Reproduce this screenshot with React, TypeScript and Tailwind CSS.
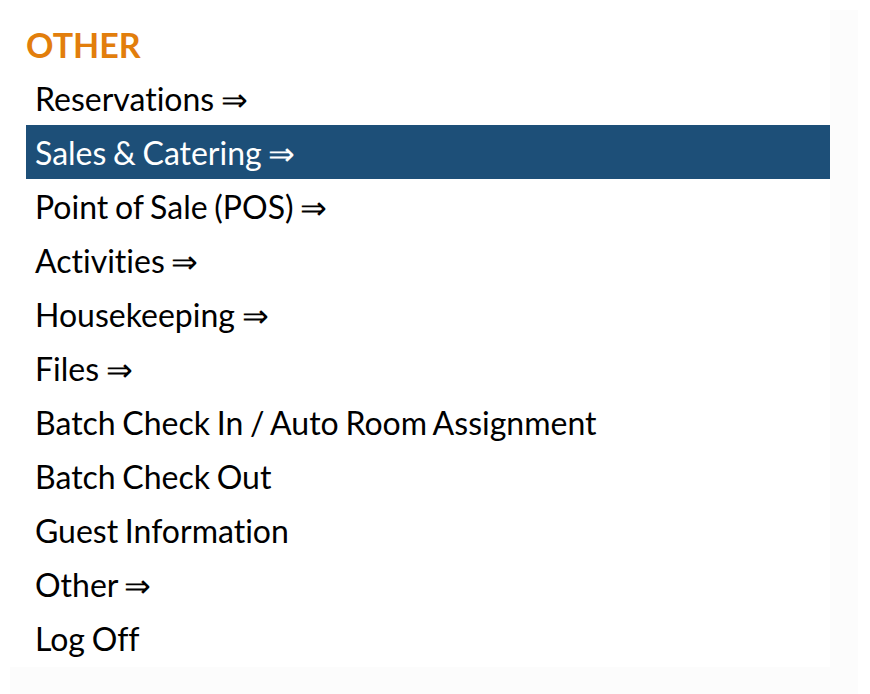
export default function App() {
  const items = [
    'Reservations ⇒',
    'Sales & Catering ⇒',
    'Point of Sale (POS) ⇒',
    'Activities ⇒',
    'Housekeeping ⇒',
    'Files ⇒',
    'Batch Check In / Auto Room Assignment',
    'Batch Check Out',
    'Guest Information',
    'Other ⇒',
    'Log Off',
  ];

  return (
    <div
      className="min-h-screen bg-white pl-[10px] pt-[10px] [font-variant-ligatures:none]"
      style={{ fontFamily: 'Lato, "Noto Sans", sans-serif' }}
    >
      <div className="w-[848px] bg-[#fcfcfc] pr-[28px] pb-[28px]">
        <div className="bg-white pl-4 pb-[2px]">
          <h2 className="h-[61px] pt-[16px] text-[34px] leading-[38px] font-bold text-[#e27e0c]">OTHER</h2>
          <ul>
            {items.map((item, i) => (
              <li
                key={item}
                className={
                  i === 1
                    ? 'h-[54px] pl-[9px] text-[32px] leading-[55px] [word-spacing:-1.5px] text-white bg-[#1d4f78]'
                    : 'h-[54px] pl-[9px] text-[32px] leading-[55px] [word-spacing:-1.5px] text-black'
                }
              >
                {item}
              </li>
            ))}
          </ul>
        </div>
      </div>
    </div>
  );
}
